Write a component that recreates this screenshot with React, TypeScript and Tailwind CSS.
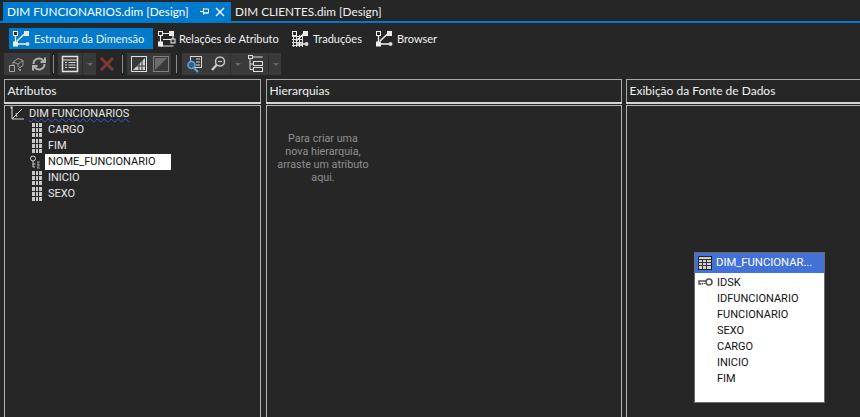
import type { ReactNode } from 'react'

const uiFont = { fontFamily: 'Lato, "Liberation Sans", sans-serif' }
const treeFont = { fontFamily: 'Roboto, "Liberation Sans", sans-serif' }

function DimIcon({ variant = 0 }: { variant?: number }) {
  return (
    <svg width="20" height="18" viewBox="0 0 20 18" fill="none" className="shrink-0">
      {variant === 2 && (
        <path d="M1 6.500h11M1 9.500h11M1 12.500h11M1 15.500h11M2.500 5v12M5.500 5v12M8.500 5v12M11.500 5v12" stroke="#dcdcdc" />
      )}
      {variant === 1 ? (
        <>
          <path d="M3.500 3v13h13M5 3.500h9M16 5v5M6 9.500h9" stroke="#e8e8e8" strokeWidth="1.200" />
          <rect x="14" y="9" width="4" height="4" fill="#3a3a3a" stroke="#f0f0f0" />
        </>
      ) : (
        <>
          <path d="M5 11L13 3.500" stroke="#e8e8e8" strokeWidth="1.600" />
          <path d="M6 14h9" stroke="#e8e8e8" strokeWidth="1.600" />
          {variant === 0 && <path d="M3.500 5v7" stroke="#e8e8e8" strokeWidth="1.400" />}
        </>
      )}
      <rect x="1.500" y="1.500" width="4" height="4" fill="#2a2a2a" stroke="#f0f0f0" />
      <rect x="12.500" y="1.500" width="4" height="4" fill="#e4e4e4" stroke="#f0f0f0" />
      {variant !== 2 && <rect x="1" y="11.500" width="5" height="5" fill="#f0f0f0" />}
      {variant !== 1 && <circle cx="15.500" cy="14" r="2" fill="#d8d8d8" />}
    </svg>
  )
}

function ModeTab({ label, icon, className }: { label: string; icon: number; className: string }) {
  return (
    <div className={`flex h-[21px] shrink-0 items-center gap-[2px] pl-[3px] ${className}`}>
      <DimIcon variant={icon} />
      <span className="text-[11px] leading-none whitespace-nowrap text-[#f1f1f1]">{label}</span>
    </div>
  )
}

function ToolGroup({ children, className }: { children: ReactNode; className: string }) {
  return <div className={`flex h-[22px] shrink-0 items-center bg-[#3a3a3a] ${className}`}>{children}</div>
}

function ToolSep({ className }: { className: string }) {
  return <div className={`h-[18px] w-px shrink-0 bg-[#8a8a8a] ${className}`} />
}

function Caret() {
  return (
    <div className="flex h-full w-[14px] shrink-0 items-center justify-center border-l border-[#2d2d2d]">
      <div className="h-0 w-0 border-x-[3px] border-t-[3px] border-x-transparent border-t-[#666666]" />
    </div>
  )
}

function ToolIcon({ children, w = 24 }: { children: ReactNode; w?: number }) {
  return (
    <div className="flex h-full shrink-0 items-center justify-center" style={{ width: w }}>
      <svg width="18" height="18" viewBox="0 0 18 18" fill="none">
        {children}
      </svg>
    </div>
  )
}

function Panel({ title, className, children }: { title: string; className: string; children?: ReactNode }) {
  return (
    <section className={`flex min-h-0 shrink-0 flex-col ${className}`}>
      <header className="flex h-[23px] shrink-0 items-center border-x border-t border-[#a8a8a8] pb-[1px] pl-[2.500px] text-[12px] text-[#f1f1f1]">
        {title}
      </header>
      <div className="h-[2px] shrink-0 bg-[#d4d4d4]" />
      <div className="relative mt-px min-h-0 flex-1 border-x border-t border-[#b4b4b4]">{children}</div>
    </section>
  )
}

function GridGlyph() {
  return (
    <div className="grid h-[14px] w-[10px] shrink-0 grid-cols-3 grid-rows-3 gap-px">
      {Array.from({ length: 9 }).map((_, i) => (
        <div key={i} className="bg-[#c8c8c8]" />
      ))}
    </div>
  )
}

function Attr({ name, selected }: { name: string; selected?: boolean }) {
  return (
    <div className="relative flex h-[16px] items-center pl-[27px]">
      {selected ? (
        <>
          <svg width="12" height="14" viewBox="0 0 12 14" fill="none" className="absolute left-[24px] top-[1px]">
            <circle cx="4" cy="3.500" r="2.500" stroke="#d0d0d0" />
            <path d="M4 6v6M4 9h2.500M4 12h2" stroke="#d0d0d0" />
            <path d="M8 7h3M8 10h3M8 13h3M9 7v6" stroke="#9a9a9a" />
          </svg>
          <div className="ml-[13px] flex h-[16px] w-[126px] items-center bg-white pl-[3px] text-[#111111]">{name}</div>
        </>
      ) : (
        <>
          <GridGlyph />
          <span className="ml-[6px] text-[#e8e8e8]">{name}</span>
        </>
      )}
    </div>
  )
}

function Column({ name, pk }: { name: string; pk?: boolean }) {
  return (
    <div className="relative flex h-[16px] items-center pl-[22px]">
      {pk && (
        <svg width="15" height="9" viewBox="0 0 15 9" fill="none" className="absolute left-[3px] top-[3px]">
          <circle cx="11" cy="4" r="3" stroke="#555555" strokeWidth="1.600" />
          <path d="M8 3H1v3h1.500V5M4.500 5v1.500M6.500 5v1" stroke="#555555" strokeWidth="1.400" />
        </svg>
      )}
      {name}
    </div>
  )
}

export default function App() {
  const attrs = ['CARGO', 'FIM', 'NOME_FUNCIONARIO', 'INICIO', 'SEXO']
  const columns = ['IDSK', 'IDFUNCIONARIO', 'FUNCIONARIO', 'SEXO', 'CARGO', 'INICIO', 'FIM']

  return (
    <main className="flex h-[417px] w-[860px] flex-col overflow-hidden bg-[#262627] text-[#f1f1f1]" style={uiFont}>
      {/* document tabs */}
      <div className="flex h-[21px] shrink-0 items-end pl-[3px] text-[11.750px]">
        <div className="flex h-[19px] w-[228px] shrink-0 items-center bg-[#007acc] pl-[4px] whitespace-nowrap text-white">
          <span className="w-[192px]">DIM FUNCIONARIOS.dim [Design]</span>
          <span className="flex w-[12px] justify-center">
            <svg width="10" height="9" viewBox="0 0 10 9" fill="none">
              <path d="M0 4.500h3M3.500 1v7M3.500 2h5v4h-5M3.500 6h5" stroke="#ffffff" />
            </svg>
          </span>
          <span className="ml-[4px]">
            <svg width="10" height="10" viewBox="0 0 10 10" fill="none">
              <path d="M1 1l8 8M9 1l-8 8" stroke="#ffffff" strokeWidth="1.400" />
            </svg>
          </span>
        </div>
        <div className="flex h-[19px] items-center pl-[4px] text-[#f1f1f1]">DIM CLIENTES.dim [Design]</div>
      </div>
      <div className="h-[2px] shrink-0 bg-[#007acc]" />

      {/* designer modes */}
      <div className="mt-[5px] flex h-[21px] shrink-0 items-center pl-[9px]">
        <ModeTab label="Estrutura da Dimensão" icon={0} className="mr-[1px] w-[144px] bg-[#007acc]" />
        <ModeTab label="Relações de Atributo" icon={1} className="w-[134px]" />
        <ModeTab label="Traduções" icon={2} className="w-[84px]" />
        <ModeTab label="Browser" icon={0} className="w-[84px]" />
      </div>

      {/* toolbar */}
      <div className="mt-[4px] flex h-[22px] shrink-0 items-center pl-[4px]">
        <ToolGroup className="w-[46px]">
          <ToolIcon w={23}>
            <path d="M6 7l5-3.500 5 2v5l-3 2M6 7v3M6 7l5 2 5-3.500M11 9v3" stroke="#9a9a9a" />
            <path d="M2.500 10.500h5v6h-5zM14 12.500a1.500 1.500 0 1 0 0 2.500h-2" stroke="#a8a8a8" />
          </ToolIcon>
          <ToolIcon w={23}>
            <path
              d="M3.500 9a5.500 5.500 0 0 1 9.500-3.800L15 7M15 2.500V7h-4.500M14.500 9a5.500 5.500 0 0 1-9.500 3.800L3 11M3 15.500V11h4.500"
              stroke="#b0b0b0"
              strokeWidth="2"
            />
          </ToolIcon>
        </ToolGroup>
        <ToolSep className="mx-[3px]" />
        <ToolGroup className="ml-[1px] w-[38px]">
          <ToolIcon w={24}>
            <rect x="1.500" y="1.500" width="15" height="15" stroke="#e4e4e4" strokeWidth="1.500" />
            <path d="M1.500 5h15" stroke="#e0e0e0" />
            <path d="M4 7.500h2M7.500 7.500h7M4 10h2M7.500 10h7M4 12.500h2M7.500 12.500h7" stroke="#d8d8d8" />
          </ToolIcon>
          <Caret />
        </ToolGroup>
        <div className="flex h-[22px] w-[22px] shrink-0 items-center justify-center">
          <svg width="16" height="16" viewBox="0 0 16 16" fill="none">
            <path d="M2 2l12 12M14 2L2 14" stroke="#7d3b32" strokeWidth="3" />
          </svg>
        </div>
        <ToolSep className="mx-[4px]" />
        <ToolGroup className="w-[44px]">
          <ToolIcon w={23}>
            <rect x="1.500" y="1.500" width="15" height="15" stroke="#e0e0e0" />
            <path d="M3 15L15 3v12z" fill="#d0d0d0" />
            <path d="M6 11h10M9 8v8M12 5v11" stroke="#3a3a3a" />
          </ToolIcon>
          <ToolIcon w={21}>
            <rect x="1.500" y="1.500" width="15" height="15" stroke="#808080" />
            <path d="M3 15L15 3H3z" fill="#6c6c6c" />
          </ToolIcon>
        </ToolGroup>
        <ToolSep className="mx-[5px]" />
        <ToolGroup className="w-[99px]">
          <ToolIcon w={24}>
            <rect x="5.500" y="1.500" width="11" height="11" stroke="#d8d8d8" />
            <path d="M11 4h4M11 7h4M11 10h4" stroke="#d8d8d8" />
            <circle cx="6.500" cy="10" r="3.500" fill="#2d5f8a" stroke="#5aa5e0" strokeWidth="1.500" />
            <path d="M9 13l4 4" stroke="#5aa5e0" strokeWidth="2" />
          </ToolIcon>
          <ToolIcon w={24}>
            <circle cx="11" cy="6.500" r="4.500" stroke="#c8c8c8" strokeWidth="1.500" />
            <path d="M9 6.500h4" stroke="#c8c8c8" />
            <path d="M7.500 10L3 15" stroke="#c8c8c8" strokeWidth="2.500" />
          </ToolIcon>
          <Caret />
          <ToolIcon w={24}>
            <rect x="1.500" y="0.500" width="4" height="3" stroke="#e0e0e0" />
            <path d="M5.500 2h10" stroke="#e0e0e0" />
            <path d="M3 4v10.500h3M3 9h3" stroke="#e0e0e0" />
            <rect x="6.500" y="6.500" width="9" height="4" stroke="#e0e0e0" />
            <rect x="6.500" y="12.500" width="9" height="4" stroke="#e0e0e0" />
          </ToolIcon>
          <Caret />
        </ToolGroup>
      </div>

      {/* designer panes */}
      <div className="mt-[4px] flex min-h-0 flex-1 pl-[4px] text-[12px]">
        <Panel title="Atributos" className="w-[257px]">
          <div className="text-[11px]" style={treeFont}>
            <div className="relative flex h-[16px] items-center pl-[24px]">
              <svg width="16" height="16" viewBox="0 0 16 16" fill="none" className="absolute left-[4px] top-0">
                <path d="M3 1v12h12" stroke="#d8d8d8" />
                <path d="M3 13L13 3M7 7l1 4" stroke="#d8d8d8" />
                <rect x="1.500" y="0.500" width="2" height="2" fill="#d8d8d8" />
              </svg>
              <span className="text-[#e8e8e8] underline decoration-[#2a5bd7] decoration-wavy decoration-1">DIM FUNCIONARIOS</span>
            </div>
            {attrs.map((a) => (
              <Attr key={a} name={a} selected={a === 'NOME_FUNCIONARIO'} />
            ))}
          </div>
        </Panel>
        <Panel title="Hierarquias" className="ml-[5px] w-[356px]">
          <div className="ml-[10px] mt-[26px] w-[92px] text-center text-[10.750px] leading-[13px] text-[#8f8f8f]" style={treeFont}>
            Para criar uma
            <br />
            nova hierarquia,
            <br />
            arraste um atributo
            <br />
            aqui.
          </div>
        </Panel>
        <Panel title="Exibição da Fonte de Dados" className="ml-[4px] w-[240px]">
          {/* table node sits on the free diagram canvas */}
          <div className="absolute left-[67px] top-[146px] w-[131px] border border-[#6a6a6a] bg-white text-[11px] text-[#111111]" style={treeFont}>
            <div className="flex h-[20px] items-center gap-[4px] bg-[#4272d7] pl-[3px] text-white">
              <svg width="14" height="14" viewBox="0 0 14 14" fill="none">
                <rect x="0.500" y="0.500" width="13" height="13" fill="#d0d0d0" stroke="#222222" />
                <path d="M0.500 3.500h13M0.500 6.500h13M0.500 9.500h13M4.500 3v10M8.500 3v10" stroke="#333333" />
              </svg>
              <span className="text-[11.250px]">DIM_FUNCIONAR...</span>
            </div>
            <div className="h-[129px] pt-[2px]">
              {columns.map((c) => (
                <Column key={c} name={c} pk={c === 'IDSK'} />
              ))}
            </div>
          </div>
        </Panel>
      </div>
    </main>
  )
}
